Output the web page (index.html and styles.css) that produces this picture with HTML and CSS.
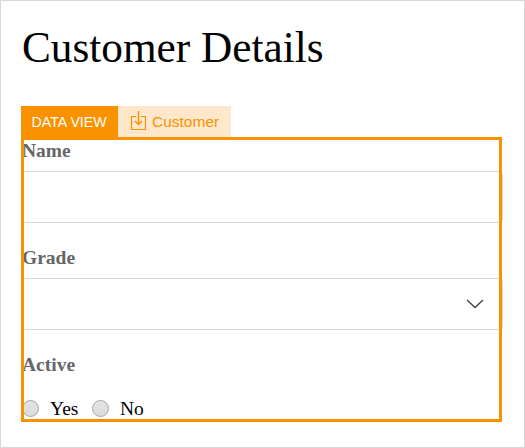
FILE: index.html
```
<!DOCTYPE html>
<html lang="en">
<head>
<meta charset="utf-8">
<title>Customer Details</title>
<link rel="stylesheet" href="styles.css">
</head>
<body>
<main class="page">
  <h1 class="title">Customer Details</h1>
  <div class="tabs">
    <div class="tab tab-type">DATA VIEW</div>
    <div class="tab tab-source">
      <svg class="source-icon" width="16" height="20" viewBox="0 0 16 20" fill="none" stroke="currentColor">
        <path d="M6 5.500H1.500v13h14v-13H11" stroke-width="1.2"/>
        <path d="M8.500 0v13.500M5 10l3.500 3.500L12 10" stroke-width="1.4"/>
      </svg>
      <span class="source-name">Customer</span>
    </div>
  </div>
  <form class="data-view">
    <label class="label" for="name">Name</label>
    <input class="control" id="name" type="text">
    <label class="label" for="grade">Grade</label>
    <div class="control select" id="grade">
      <svg width="18" height="10" viewBox="0 0 18 10" fill="none" stroke="#444" stroke-width="1.4"><path d="M1 1l8 7.500 8-7.500"/></svg>
    </div>
    <div class="label">Active</div>
    <div class="options">
      <span class="radio"></span><span class="option yes">Yes</span>
      <span class="radio"></span><span class="option">No</span>
    </div>
  </form>
</main>
</body>
</html>
```
FILE: styles.css
```
* { box-sizing: border-box; }
body { margin: 0; background: #fff; }
.page {
  width: 525px;
  height: 448px;
  padding: 21px 21px 0 20px;
  border: 1px solid #d7d7d7;
  overflow: hidden;
  font-family: "Liberation Serif", serif;
}
.title {
  margin: 0 0 34px 1px;
  font-size: 43.25px;
  line-height: 50px;
  font-weight: 400;
  color: #000;
  white-space: nowrap;
}
.tabs {
  display: flex;
  height: 31px;
  font-family: "Liberation Sans", sans-serif;
}
.tab { display: flex; align-items: center; white-space: nowrap; }
.tab-type {
  width: 97px;
  padding-left: 10.500px;
  background: #fa9200;
  color: #fff;
  font-size: 14.2px;
}
.tab-source {
  width: 113px;
  padding-left: 12px;
  background: #ffe7cb;
  color: #fa9200;
}
.source-icon { margin: 0 6px 1px 0; }
.source-name { font-size: 15.5px; }
.data-view {
  position: relative;
  width: 481px;
  height: 285px;
}
.data-view::after {
  content: "";
  position: absolute;
  inset: 0;
  border: 3px solid #fa9200;
  pointer-events: none;
}
.label {
  display: block;
  height: 34px;
  padding-left: 1px;
  line-height: 27px;
  font-size: 19.5px;
  font-weight: 700;
  color: #666;
}
.control {
  display: block;
  width: 481px;
  height: 52px;
  margin: 0 0 21px 1px;
  border: 1px solid #d7d7d7;
  border-radius: 4px;
  background: #fff;
}
.select {
  display: flex;
  align-items: center;
  justify-content: flex-end;
  padding-right: 18px;
}
.options {
  display: flex;
  align-items: center;
  height: 28px;
  margin-top: 9px;
  padding-left: 1px;
  font-size: 19.5px;
}
.option { padding-top: 2px; }
.radio {
  width: 17px;
  height: 17px;
  margin-right: 11px;
  border: 1px solid #a5a5a5;
  border-radius: 50%;
  background: linear-gradient(#e4e4e4, #dadada);
}
.yes { margin-right: 13.500px; }
```
